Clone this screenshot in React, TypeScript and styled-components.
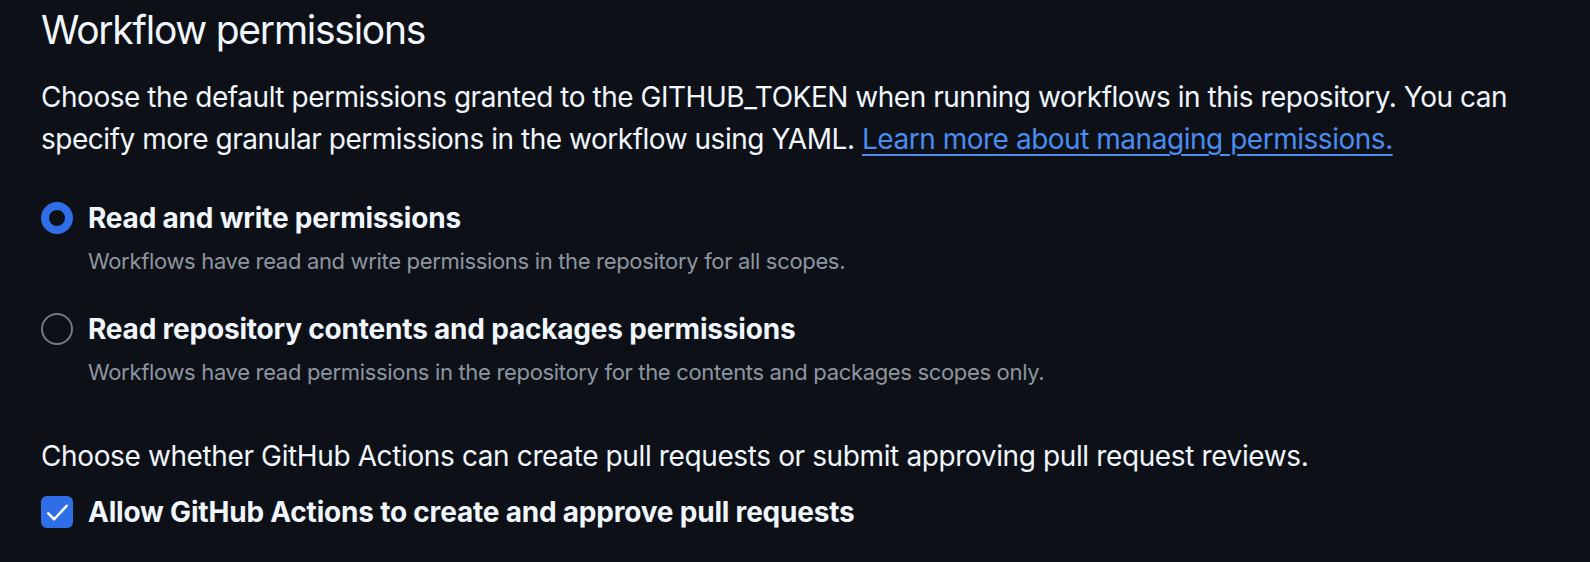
import styled, { createGlobalStyle } from "styled-components";

const GlobalStyle = createGlobalStyle`
  body {
    margin: 0;
    background: #0d1117;
    color: #f0f6fc;
    font-family: Inter, "Noto Sans", sans-serif;
  }
`

const Wrapper = styled.main`
  padding: 0 40px 0 41px;
  height: 562px;
  box-sizing: border-box;
  overflow: hidden;
`

const Title = styled.h2`
  margin: 0;
  font-size: 39px;
  font-weight: 400;
  line-height: 60px;
  letter-spacing: -1.25px;
`

const Intro = styled.p`
  margin: 16px 0 0;
  font-size: 28px;
  line-height: 42px;
  letter-spacing: -0.47px;
  max-width: 1490px;
`

const Link = styled.a`
  color: #4a8cf0;
  text-decoration: underline;
  text-underline-offset: 5px;
  text-decoration-thickness: 2px;
`

const Options = styled.div`
  display: flex;
  flex-direction: column;
  gap: 30px;
  margin-top: 38px;
`

const Option = styled.div`
  display: grid;
  grid-template-columns: 32px 1fr;
  column-gap: 15px;
  row-gap: 5px;
  align-items: center;
`

const Radio = styled.span<{ $checked?: boolean }>`
  width: 32px;
  height: 32px;
  box-sizing: border-box;
  border-radius: 50%;
  border: ${p => (p.$checked ? "8px solid #2f6ee6" : "2px solid #737a84")};
  background: #0d1117;
`

const Label = styled.span`
  font-size: 28px;
  font-weight: 700;
  line-height: 40px;
  letter-spacing: -0.2px;
`

const Hint = styled.span`
  grid-column: 2;
  font-size: 22px;
  line-height: 36px;
  letter-spacing: -0.33px;
  color: #8d96a0;
`

const Question = styled.p`
  margin: 46px 0 0;
  font-size: 28px;
  line-height: 40px;
  letter-spacing: -0.38px;
`

const CheckRow = styled.div`
  display: flex;
  align-items: center;
  gap: 15px;
  margin-top: 16px;
`

const Checkbox = styled.span`
  width: 32px;
  height: 32px;
  border-radius: 6px;
  background: #2f6ee6;
  display: flex;
  align-items: center;
  justify-content: center;
`

const options = [
  {
    label: "Read and write permissions",
    hint: "Workflows have read and write permissions in the repository for all scopes.",
    checked: true,
  },
  {
    label: "Read repository contents and packages permissions",
    hint: "Workflows have read permissions in the repository for the contents and packages scopes only.",
    checked: false,
  },
]

export default function App() {
  return (
    <>
      <GlobalStyle />
      <Wrapper>
        <Title>Workflow permissions</Title>
        <Intro>
          Choose the default permissions granted to the GITHUB_TOKEN when running workflows in this
          repository. You can specify more granular permissions in the workflow using YAML.{" "}
          <Link href="#">Learn more about managing permissions.</Link>
        </Intro>
        <Options>
          {options.map(o => (
            <Option key={o.label}>
              <Radio $checked={o.checked} />
              <Label>{o.label}</Label>
              <Hint>{o.hint}</Hint>
            </Option>
          ))}
        </Options>
        <Question>
          Choose whether GitHub Actions can create pull requests or submit approving pull request reviews.
        </Question>
        <CheckRow>
          <Checkbox>
            <svg width="27" height="27" viewBox="0 0 16 16" fill="none">
              <path d="M2.5 8.5 L6 12 L13.5 4" stroke="#fff" strokeWidth="1.5" strokeLinecap="round" strokeLinejoin="round" />
            </svg>
          </Checkbox>
          <Label>Allow GitHub Actions to create and approve pull requests</Label>
        </CheckRow>
      </Wrapper>
    </>
  )
}
